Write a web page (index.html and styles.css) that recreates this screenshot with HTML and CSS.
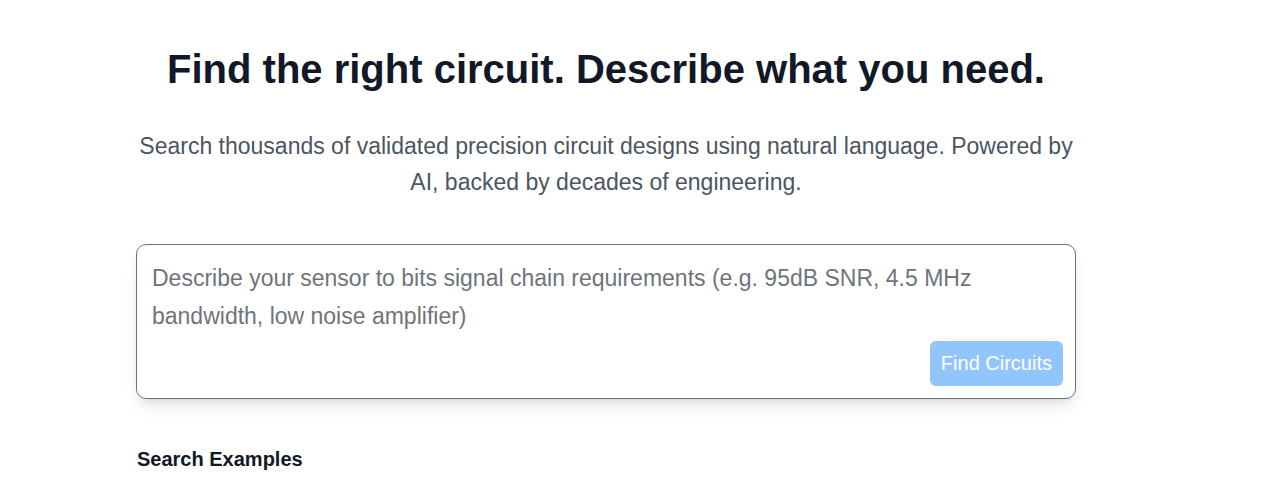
FILE: index.html
```html
<!DOCTYPE html>
<html lang="en">
<head>
<meta charset="utf-8">
<title>Find the right circuit</title>
<link rel="stylesheet" href="styles.css">
</head>
<body>
<main class="page">
  <section class="hero">
    <h1 class="title">Find the right circuit. Describe what you need.</h1>
    <p class="subtitle">Search thousands of validated precision circuit designs using natural language. Powered by AI, backed by decades of engineering.</p>
  </section>
  <form class="search-box">
    <textarea class="search-input" placeholder="Describe your sensor to bits signal chain requirements (e.g. 95dB SNR, 4.5 MHz bandwidth, low noise amplifier)"></textarea>
    <div class="actions">
      <button type="button" class="find-btn" disabled>Find Circuits</button>
    </div>
  </form>
  <h2 class="examples-title">Search Examples</h2>
</main>
</body>
</html>
```
FILE: styles.css
```css
* { box-sizing: border-box; }
html, body { margin: 0; padding: 0; background: #ffffff; }
body {
  font-family: "Liberation Sans", Arial, sans-serif;
  color: #111827;
}
.page {
  width: 940px;
  margin-left: 136px;
  padding-top: 45px;
}
.hero { text-align: center; }
.title {
  margin: 0;
  font-size: 40px;
  line-height: 48px;
  font-weight: 700;
  color: #111827;
}
.subtitle {
  margin: 35px 0 0;
  font-size: 23px;
  line-height: 36px;
  color: #4b5563;
}
.search-box {
  margin-top: 44px;
  border: 1px solid #6b7280;
  border-radius: 10px;
  background: #fff;
  box-shadow: 0 10px 15px -3px rgba(0,0,0,0.1), 0 4px 6px -4px rgba(0,0,0,0.1);
  padding: 14px 12px 12px 15px;
  display: flex;
  flex-direction: column;
}
.search-input {
  border: none;
  outline: none;
  resize: none;
  font-family: "Liberation Sans", Arial, sans-serif;
  font-size: 23px;
  line-height: 38px;
  height: 76px;
  padding: 0;
  color: #111827;
  overflow: hidden;
}
.search-input::placeholder { color: #6f747c; opacity: 1; }
.actions {
  display: flex;
  justify-content: flex-end;
  margin-top: 6px;
}
.find-btn {
  border: none;
  border-radius: 6px;
  background: #93c5fd;
  color: #ffffff;
  font-family: "Liberation Sans", Arial, sans-serif;
  font-size: 20px;
  height: 45px;
  padding: 0 11px;
}
.examples-title {
  margin: 46px 0 0 1px;
  font-size: 20px;
  line-height: 28px;
  font-weight: 700;
  color: #111827;
}
```
